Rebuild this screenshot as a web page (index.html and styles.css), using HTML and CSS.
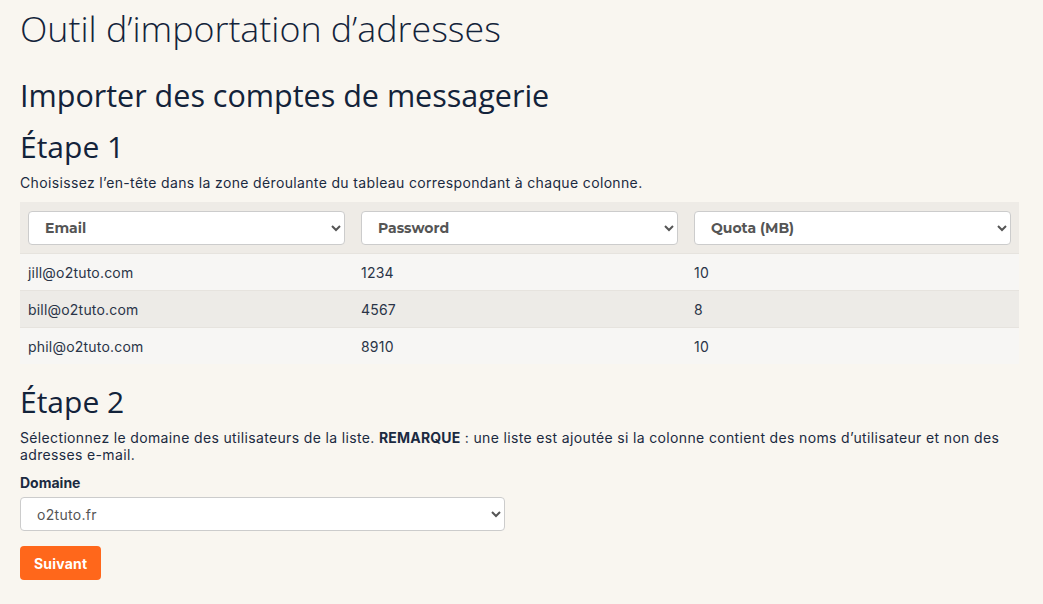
FILE: index.html
```html
<!DOCTYPE html>
<html lang="fr">
<head>
<meta charset="utf-8">
<title>Outil d’importation d’adresses</title>
<link rel="stylesheet" href="styles.css">
</head>
<body>
<main class="page">
  <h1 class="title">Outil d’importation d’adresses</h1>
  <h2 class="subtitle">Importer des comptes de messagerie</h2>

  <section class="step">
    <h3 class="step-title">Étape 1</h3>
    <p class="text">Choisissez l’en-tête dans la zone déroulante du tableau correspondant à chaque colonne.</p>
    <table class="grid">
      <thead>
        <tr>
          <th><select class="head-select"><option>Email</option></select></th>
          <th><select class="head-select"><option>Password</option></select></th>
          <th><select class="head-select"><option>Quota (MB)</option></select></th>
        </tr>
      </thead>
      <tbody>
        <tr><td>jill@o2tuto.com</td><td>1234</td><td>10</td></tr>
        <tr><td>bill@o2tuto.com</td><td>4567</td><td>8</td></tr>
        <tr><td>phil@o2tuto.com</td><td>8910</td><td>10</td></tr>
      </tbody>
    </table>
  </section>

  <section class="step step-2">
    <h3 class="step-title">Étape 2</h3>
    <p class="text">Sélectionnez le domaine des utilisateurs de la liste. <strong>REMARQUE</strong> : une liste est ajoutée si la colonne contient des noms d’utilisateur et non des adresses e-mail.</p>
    <label class="label" for="domain">Domaine</label>
    <select id="domain" class="domain-select"><option>o2tuto.fr</option></select>
    <button class="btn" type="button">Suivant</button>
  </section>
</main>
</body>
</html>
```

FILE: styles.css
```css
html, body {
  margin: 0;
  padding: 0;
  background: #f9f6f0;
}
body {
  font-family: "Inter", "Noto Sans", sans-serif;
  color: #1b2a41;
}
.page {
  padding: 0 24px 0 20px;
}
.title {
  font-family: "Open Sans", sans-serif;
  font-weight: 300;
  font-size: 35.8px;
  line-height: 48px;
  margin: 4px 0 0;
  color: #13233a;
}
.subtitle {
  font-family: "Open Sans", sans-serif;
  font-weight: 500;
  font-size: 30.5px;
  line-height: 38px;
  margin: 24px 0 0;
  color: #13233a;
}
.step-title {
  font-family: "Open Sans", sans-serif;
  font-weight: 400;
  font-size: 30px;
  line-height: 40px;
  margin: 13px 0 0;
  color: #13233a;
}
.text {
  font-size: 14px;
  letter-spacing: 0.35px;
  line-height: 17px;
  margin: 7px 0 11px;
  color: #1b2a41;
}
.text strong {
  letter-spacing: 0.2px;
}
.grid {
  width: 100%;
  border-collapse: collapse;
  table-layout: fixed;
}
.grid thead tr {
  background: #eeebe6;
}
.grid th {
  padding: 9px 8px 8px;
  text-align: left;
}
.head-select {
  width: 100%;
  height: 34px;
  border: 1px solid #cccccc;
  border-radius: 4px;
  background: #ffffff;
  font-family: "Montserrat", "Open Sans", sans-serif;
  font-weight: 700;
  font-size: 14px;
  color: #555555;
  padding: 0 12px;
}
.grid td {
  height: 36px;
  padding: 0 8px;
  font-size: 14px;
  letter-spacing: 0.2px;
  color: #2a3447;
  border-top: 1px solid #e6e3de;
}
.grid tbody tr {
  background: #f7f6f4;
}
.grid tbody tr:nth-child(2) {
  background: #edebe7;
}
.step-2 .step-title {
  margin-top: 18px;
}
.label {
  display: block;
  font-weight: 700;
  font-size: 14px;
  margin: 11px 0 6px;
}
.domain-select {
  display: block;
  width: 485px;
  height: 34px;
  border: 1px solid #cccccc;
  border-radius: 4px;
  background: #ffffff;
  font-family: "Inter", sans-serif;
  font-size: 14px;
  letter-spacing: 0.3px;
  color: #555;
  padding: 0 12px;
}
.btn {
  display: block;
  margin-top: 15px;
  height: 34px;
  padding: 0 14px;
  border: 0;
  border-radius: 4px;
  background: #ff671b;
  color: #ffffff;
  font-family: "Inter", sans-serif;
  font-weight: 700;
  font-size: 14px;
  letter-spacing: 0.2px;
}
```
